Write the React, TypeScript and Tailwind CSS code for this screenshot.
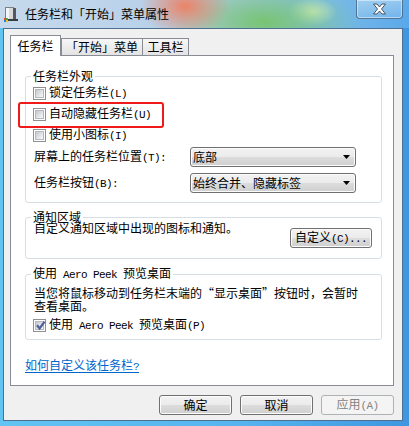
import React from "react";

function M({ children }: { children: React.ReactNode }) {
  return (
    <span className="font-['Liberation_Mono',monospace] text-[11px] tracking-[-0.6px]">{children}</span>
  );
}

function CheckBox({ checked = false }: { checked?: boolean }) {
  return (
    <div className="relative w-[13px] h-[13px] shrink-0 border border-[#8e8f8f] bg-white p-[1px]">
      <div className="w-full h-full border border-[#b4b8be] bg-[linear-gradient(135deg,#c4c8ce,#eef0f2_80%,#f8f8f8)]" />
      {checked && (
        <svg className="absolute left-[1px] top-[0px]" width="11" height="11" viewBox="0 0 11 11">
          <path d="M2 5.2 L4.6 8.4 L9.6 1.6" stroke="#4b5f98" strokeWidth="2.2" fill="none" strokeLinejoin="miter" />
        </svg>
      )}
    </div>
  );
}

function WinButton({
  children,
  disabled = false,
  className = "",
}: {
  children: React.ReactNode;
  disabled?: boolean;
  className?: string;
}) {
  return (
    <div
      className={`h-[20px] flex items-center justify-center rounded-[3px] border leading-[14px] ${
        disabled
          ? "border-[#adb2b5] bg-[#f4f4f4] text-[#838383]"
          : "border-[#707070] bg-[linear-gradient(180deg,#f2f2f2_0%,#ebebeb_50%,#dddddd_50%,#cfcfcf_100%)] shadow-[inset_0_0_0_1px_#fcfcfc]"
      } ${className}`}
    >
      {children}
    </div>
  );
}

function Combo({ text }: { text: string }) {
  return (
    <div className="w-[166px] h-[20px] flex items-center rounded-[3px] border border-[#707070] bg-[linear-gradient(180deg,#f2f2f2_0%,#ebebeb_50%,#dddddd_50%,#cfcfcf_100%)] shadow-[inset_0_0_0_1px_#fcfcfc] pl-[2px] pr-[5px]">
      <span className="flex-1 leading-[14px]">{text}</span>
      <svg width="7" height="4" viewBox="0 0 7 4">
        <path d="M0 0H7L3.5 4Z" fill="#000" />
      </svg>
    </div>
  );
}

function TitleIcon() {
  return (
    <svg width="16" height="16" viewBox="0 0 16 16" className="shrink-0">
      <rect x="2.5" y="1.5" width="8" height="12" fill="#d8dadc" stroke="#7d8184" strokeWidth="1" />
      <rect x="10" y="2" width="3" height="12" fill="#55595d" />
      <rect x="3" y="2" width="3" height="11" fill="#f4f5f6" />
      <rect x="1" y="13" width="14" height="2" fill="#3a3d40" />
      <rect x="1" y="12" width="2" height="2" fill="#e8432c" />
      <rect x="3" y="12" width="2" height="2" fill="#3fae3a" />
      <rect x="1" y="14" width="2" height="2" fill="#2a7fe0" />
      <rect x="3" y="14" width="2" height="2" fill="#f3c21b" />
    </svg>
  );
}

export default function App() {
  return (
    <div className="w-[409px] h-[426px] overflow-hidden flex flex-col text-[12px] text-black font-['Noto_Sans_CJK_SC',sans-serif] [background:linear-gradient(90deg,#62c4f2_0%,#55b4ee_60%,#3f96e0_100%)]">
      {/* Title bar */}
      <div className="h-[28px] shrink-0 flex items-start [background:radial-gradient(ellipse_45px_30px_at_185px_6px,rgba(238,128,98,0.95),rgba(238,128,98,0)),radial-gradient(ellipse_95px_40px_at_265px_22px,rgba(118,196,108,0.95),rgba(118,196,108,0)),radial-gradient(ellipse_25px_14px_at_312px_12px,rgba(232,246,206,0.95),rgba(232,246,206,0)),linear-gradient(90deg,#c6d9ec_0%,#b9d2ea_35%,#a9cbe0_55%,#7cbce8_80%,#5aa8ea_100%)]">
        <div className="ml-[3px] mt-[6px]">
          <TitleIcon />
        </div>
        <div className="ml-[6px] mt-[6px] leading-[16px] text-[12px]">任务栏和「开始」菜单属性</div>
        <div className="ml-auto mr-[6px] w-[47px] h-[19px] rounded-b-[4px] border border-t-0 border-[rgba(30,50,80,0.55)] bg-[linear-gradient(180deg,rgba(255,255,255,0.35),rgba(255,255,255,0.12))] shadow-[inset_0_0_0_1px_rgba(255,255,255,0.45)] flex items-center justify-center">
          <svg width="15" height="12" viewBox="0 0 15 12">
            <path
              d="M1.5 1 L5 1 L7.5 4 L10 1 L13.5 1 L9.5 6 L13.5 11 L10 11 L7.5 8 L5 11 L1.5 11 L5.5 6 Z"
              fill="#ffffff"
              stroke="#4a5563"
              strokeWidth="1"
              strokeLinejoin="round"
            />
          </svg>
        </div>
      </div>

      {/* Client area */}
      <div className="ml-[3px] w-[400px] h-[393px] shrink-0 border border-[#4f6f90] bg-[#f0f0f0] pl-[6px] pt-[6px] flex flex-col">
        {/* Tabs */}
        <div className="h-[20px] flex items-end">
          <div className="relative z-10 -mb-[1px] w-[51px] h-[21px] border border-b-0 border-[#898c95] bg-white flex items-center justify-center leading-[14px] pb-[1px]">
            任务栏
          </div>
          <div className="w-[82px] h-[17px] border border-b-0 border-[#898c95] bg-[linear-gradient(180deg,#f7f7f7,#e3e3e3)] flex items-center justify-center leading-[14px]">
            「开始」菜单
          </div>
          <div className="w-[46px] h-[17px] border border-b-0 border-l-0 border-[#898c95] bg-[linear-gradient(180deg,#f7f7f7,#e3e3e3)] flex items-center justify-center leading-[14px]">
            工具栏
          </div>
        </div>

        {/* Tab panel */}
        <div className="w-[384px] h-[331px] border border-[#898c95] bg-white flex flex-col">
          {/* Group 1 */}
          <fieldset className="ml-[14px] mt-[13px] w-[357px] border border-[#d5dfe5] rounded-[3px]">
            <legend className="ml-[5px] px-[2px] leading-[14px]">任务栏外观</legend>
            <div className="pl-[7px] pt-[3px] pb-[9px] flex flex-col">
              <div className="h-[14px] flex items-center gap-[3px] leading-[14px]">
                <CheckBox />
                <span>
                  锁定任务栏<M>(L)</M>
                </span>
              </div>
              <div className="relative mt-[7px] h-[14px] flex items-center gap-[3px] leading-[14px]">
                <CheckBox />
                <span>
                  自动隐藏任务栏<M>(U)</M>
                </span>
                <div className="absolute left-[-15px] top-[-5px] w-[146px] h-[26px] border-2 border-[#f01a1a] rounded-[3px]" />
              </div>
              <div className="mt-[7px] h-[14px] flex items-center gap-[3px] leading-[14px]">
                <CheckBox />
                <span>
                  使用小图标<M>(I)</M>
                </span>
              </div>
              <div className="mt-[5px] flex items-center">
                <span className="ml-[1px] w-[156px] leading-[14px]">
                  屏幕上的任务栏位置<M>(T):</M>
                </span>
                <Combo text="底部" />
              </div>
              <div className="mt-[6px] flex items-center">
                <span className="ml-[1px] w-[156px] leading-[14px]">
                  任务栏按钮<M>(B):</M>
                </span>
                <Combo text="始终合并、隐藏标签" />
              </div>
            </div>
          </fieldset>

          {/* Group 2 */}
          <fieldset className="ml-[14px] mt-[7px] w-[357px] border border-[#d5dfe5] rounded-[3px]">
            <legend className="ml-[5px] px-[2px] leading-[14px]">通知区域</legend>
            <div className="pl-[8px] pr-[9px] pb-[10px] flex items-start justify-between">
              <span className="-mt-[3px] leading-[13px]">自定义通知区域中出现的图标和通知。</span>
              <WinButton className="mt-[4px] w-[82px]">
                <span>
                  自定义<M>(C)...</M>
                </span>
              </WinButton>
            </div>
          </fieldset>

          {/* Group 3 */}
          <fieldset className="ml-[14px] mt-[7px] w-[357px] border border-[#d5dfe5] rounded-[3px]">
            <legend className="ml-[5px] px-[2px] leading-[14px]">
              使用<M> Aero Peek </M>预览桌面
            </legend>
            <div className="pl-[7px] pt-[4px] pb-[7px] flex flex-col">
              <p className="ml-[1px] leading-[13px] whitespace-nowrap">
                当您将鼠标移动到任务栏末端的“显示桌面”按钮时，会暂时
                <br />
                查看桌面。
              </p>
              <div className="mt-[6px] h-[14px] flex items-center gap-[3px] leading-[14px]">
                <CheckBox checked />
                <span>
                  使用<M> Aero Peek </M>预览桌面<M>(P)</M>
                </span>
              </div>
            </div>
          </fieldset>

          <a className="ml-[14px] mt-[18px] self-start leading-[14px] text-[#0066cc] underline underline-offset-[2px]">
            如何自定义该任务栏<M>?</M>
          </a>
        </div>

        {/* Bottom buttons */}
        <div className="w-[384px] mt-[9px] flex justify-end gap-[8px]">
          <WinButton className="w-[73px]">确定</WinButton>
          <WinButton className="w-[73px]">取消</WinButton>
          <WinButton className="w-[73px]" disabled>
            <span>
              应用<M>(A)</M>
            </span>
          </WinButton>
        </div>
      </div>
    </div>
  );
}
